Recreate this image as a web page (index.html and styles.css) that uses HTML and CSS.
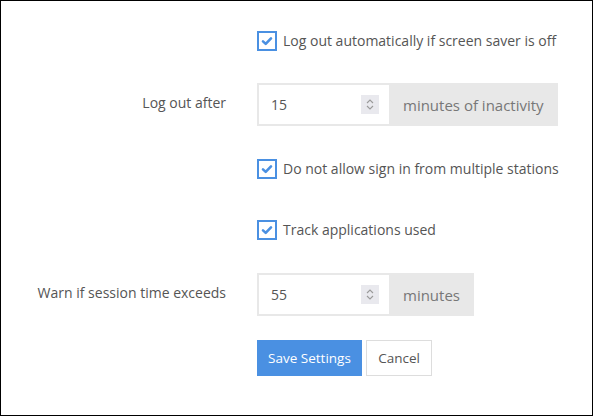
FILE: index.html
```html
<!DOCTYPE html>
<html>
<head>
<meta charset="utf-8">
<link rel="stylesheet" href="styles.css">
</head>
<body>
<div class="frame">
  <form class="settings">
    <div class="row row-first">
      <div class="label"></div>
      <label class="check">
        <span class="box"><svg viewBox="0 0 12 12" width="12" height="12"><path d="M2 6.4 L4.7 8.9 L10 3.4" fill="none" stroke="#4a90e2" stroke-width="2.6" stroke-linecap="round" stroke-linejoin="round"/></svg></span>
        <span class="check-text">Log out automatically if screen saver is off</span>
      </label>
    </div>
    <div class="row row-input1">
      <div class="label">Log out after</div>
      <div class="group">
        <div class="field"><span class="value">15</span><span class="spin"><svg viewBox="0 0 18 19" width="18" height="19"><path d="M6 8 L9 5 L12 8" fill="none" stroke="#9a9a9a" stroke-width="1.1"/><path d="M6 11 L9 14 L12 11" fill="none" stroke="#9a9a9a" stroke-width="1.1"/></svg></span></div>
        <div class="addon">minutes of inactivity</div>
      </div>
    </div>
    <div class="row row-check2">
      <div class="label"></div>
      <label class="check">
        <span class="box"><svg viewBox="0 0 12 12" width="12" height="12"><path d="M2 6.4 L4.7 8.9 L10 3.4" fill="none" stroke="#4a90e2" stroke-width="2.6" stroke-linecap="round" stroke-linejoin="round"/></svg></span>
        <span class="check-text">Do not allow sign in from multiple stations</span>
      </label>
    </div>
    <div class="row row-check3">
      <div class="label"></div>
      <label class="check">
        <span class="box"><svg viewBox="0 0 12 12" width="12" height="12"><path d="M2 6.4 L4.7 8.9 L10 3.4" fill="none" stroke="#4a90e2" stroke-width="2.6" stroke-linecap="round" stroke-linejoin="round"/></svg></span>
        <span class="check-text">Track applications used</span>
      </label>
    </div>
    <div class="row row-input2">
      <div class="label">Warn if session time exceeds</div>
      <div class="group">
        <div class="field"><span class="value">55</span><span class="spin"><svg viewBox="0 0 18 19" width="18" height="19"><path d="M6 8 L9 5 L12 8" fill="none" stroke="#9a9a9a" stroke-width="1.1"/><path d="M6 11 L9 14 L12 11" fill="none" stroke="#9a9a9a" stroke-width="1.1"/></svg></span></div>
        <div class="addon">minutes</div>
      </div>
    </div>
    <div class="row row-buttons">
      <div class="label"></div>
      <div class="buttons">
        <button type="button" class="btn btn-primary">Save Settings</button>
        <button type="button" class="btn btn-default">Cancel</button>
      </div>
    </div>
  </form>
</div>
</body>
</html>
```

FILE: styles.css
```css
html, body {
  margin: 0;
  padding: 0;
  background: #fff;
}
body {
  font-family: "Open Sans", "Liberation Sans", sans-serif;
  font-size: 14px;
  color: #555;
}
.frame {
  box-sizing: border-box;
  width: 593px;
  height: 416px;
  border: 1px solid #000;
}
.settings {
  display: flex;
  flex-direction: column;
}
.row {
  display: grid;
  grid-template-columns: 225px 1fr;
  column-gap: 31px;
  align-items: center;
}
.row-first { margin-top: 30px; }
.row-input1 { margin-top: 32px; }
.row-check2 { margin-top: 33px; }
.row-check3 { margin-top: 41px; }
.row-input2 { margin-top: 33px; }
.row-buttons { margin-top: 24px; }
.label {
  text-align: right;
  color: #555;
  line-height: 20px;
  margin-top: -4px;
}
.check {
  display: flex;
  align-items: center;
  gap: 6px;
  height: 20px;
}
.box {
  box-sizing: border-box;
  width: 20px;
  height: 20px;
  border: 2px solid #4a90e2;
  background: #fff;
  display: flex;
  align-items: center;
  justify-content: center;
}
.box svg { display: block; }
.check-text {
  line-height: 20px;
  color: #555;
}
.group {
  display: flex;
  height: 43px;
}
.field {
  box-sizing: border-box;
  width: 132px;
  height: 43px;
  border: 2px solid #e8e8e8;
  border-right: none;
  background: #fff;
  display: flex;
  align-items: center;
  justify-content: space-between;
  padding: 0 10px 0 12px;
}
.value {
  color: #555;
  margin-top: -1px;
}
.spin {
  width: 18px;
  height: 19px;
  background: #e9e9ee;
  display: block;
}
.spin svg { display: block; }
.addon {
  background: #e8e8e8;
  color: #777;
  font-size: 15px;
  display: flex;
  align-items: center;
  padding: 0 14px 0 14px;
  height: 43px;
}
.buttons {
  display: flex;
  gap: 4px;
}
.btn {
  font-family: "Open Sans", "Liberation Sans", sans-serif;
  font-size: 13.5px;
  height: 36px;
  padding: 0;
  border-radius: 0;
  white-space: nowrap;
  cursor: pointer;
}
.btn-primary {
  background: #4a90e2;
  border: 1px solid #4a90e2;
  color: #fff;
  width: 105px;
}
.btn-default {
  background: #fff;
  border: 1px solid #ddd;
  color: #555;
  width: 66px;
}
```
